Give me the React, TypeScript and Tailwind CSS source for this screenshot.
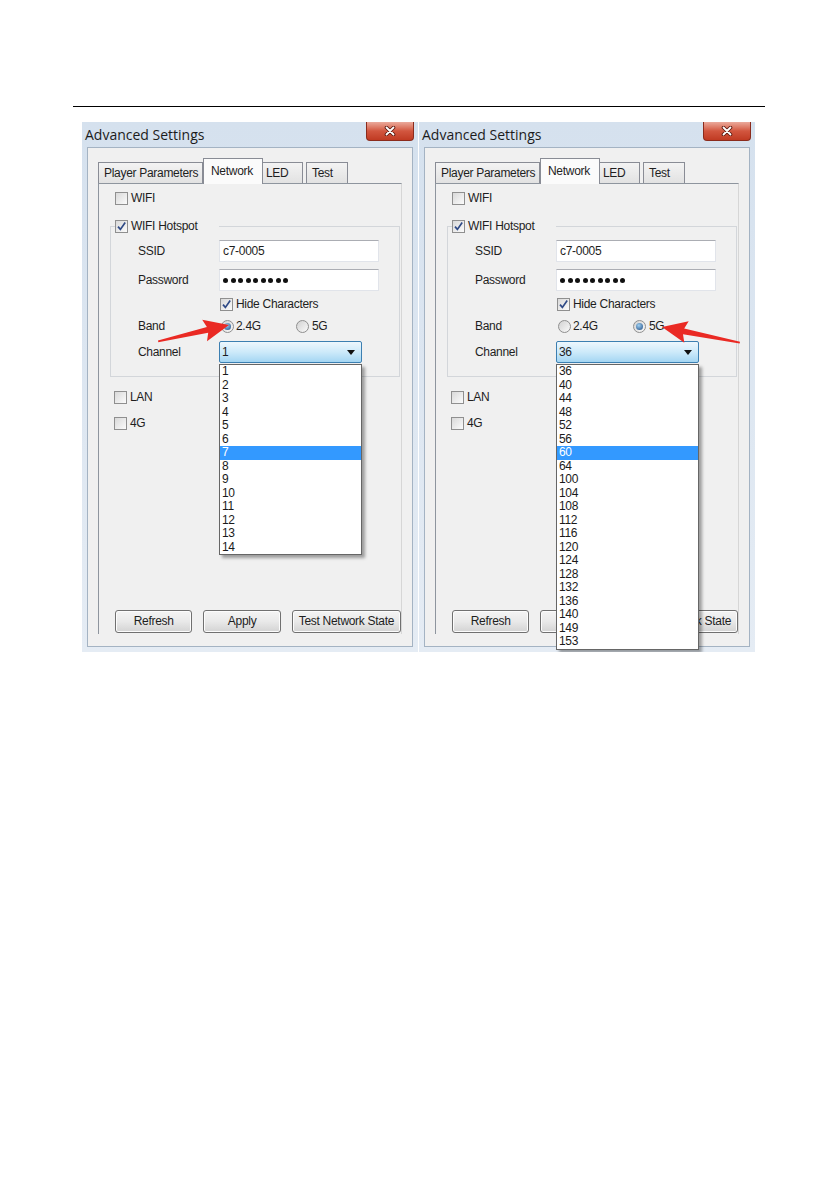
import React from 'react';

type Side = {
  band: '2.4G' | '5G';
  channel: string;
  channels: string[];
  selected: string;
};

const LEFT: Side = {
  band: '2.4G',
  channel: '1',
  channels: ['1', '2', '3', '4', '5', '6', '7', '8', '9', '10', '11', '12', '13', '14'],
  selected: '7',
};

const RIGHT: Side = {
  band: '5G',
  channel: '36',
  channels: [
    '36', '40', '44', '48', '52', '56', '60', '64', '100', '104', '108',
    '112', '116', '120', '124', '128', '132', '136', '140', '149', '153',
  ],
  selected: '60',
};

const Checkbox = ({ checked = false }: { checked?: boolean }) => (
  <span className="inline-flex h-[13px] w-[13px] shrink-0 items-center justify-center border border-[#8f8f8f] bg-linear-to-br from-[#d9d9d9] to-[#fbfbfb]">
    {checked && (
      <svg viewBox="0 0 11 11" className="h-[11px] w-[11px]">
        <path d="M2 5.6 L4.4 8.4 L9.2 1.6" stroke="#2f4a86" strokeWidth="1.7" fill="none" />
      </svg>
    )}
  </span>
);

const Radio = ({ checked = false }: { checked?: boolean }) => (
  <span className="inline-flex h-[13px] w-[13px] shrink-0 items-center justify-center rounded-full border border-[#8f8f8f] bg-linear-to-br from-[#d2d2d2] to-[#fafafa]">
    {checked && (
      <span className="h-[7px] w-[7px] rounded-full bg-[radial-gradient(circle_at_40%_35%,#9fd0f2,#1d4a82)]" />
    )}
  </span>
);

const CheckRow = ({ checked = false, label }: { checked?: boolean; label: string }) => (
  <div className="flex h-[13px] items-center gap-[3px]">
    <Checkbox checked={checked} />
    <span>{label}</span>
  </div>
);

const CloseButton = () => (
  <div className="mr-[4px] flex h-[19px] w-[48px] items-center justify-center rounded-b-[4px] border border-t-0 border-[#8b2b1c] bg-linear-to-b from-[#eaa99b] via-[#d2563f] to-[#c03a22]">
    <svg viewBox="0 0 12 10" className="h-[10px] w-[12px]">
      <path d="M2.5 1.5 L9.5 8.5 M9.5 1.5 L2.5 8.5" stroke="#5b1910" strokeWidth="3.6" strokeLinecap="round" />
      <path d="M2.5 1.5 L9.5 8.5 M9.5 1.5 L2.5 8.5" stroke="#ffffff" strokeWidth="1.8" strokeLinecap="round" />
    </svg>
  </div>
);

const Field = ({ label, children }: { label: string; children: React.ReactNode }) => (
  <div className="flex items-center pl-[23px]">
    <span className="w-[81px]">{label}</span>
    <div className="flex h-[22px] w-[160px] items-center border border-[#e1e4ea] border-t-[#abadb3] bg-white pl-[3px]">
      {children}
    </div>
  </div>
);

const ChannelSelect = ({ side }: { side: Side }) => (
  <div className="relative h-[22px] w-[143px]">
    <div className="flex h-full items-center justify-between rounded-[2px] border border-[#3c7fb1] bg-linear-to-b from-[#edf7fd] via-[#cdeafa] to-[#a4d6f3] pl-[2px] pr-[6px]">
      <span>{side.channel}</span>
      <svg viewBox="0 0 8 5" className="h-[5px] w-[8px]">
        <path d="M0 0 H8 L4 5 Z" fill="#111" />
      </svg>
    </div>
    <ul className="absolute left-0 top-[23px] z-20 w-[143px] border border-[#666666] bg-white shadow-[3px_3px_3px_rgba(0,0,0,0.35)]">
      {side.channels.map((c) => (
        <li
          key={c}
          className={`h-[13.5px] pl-[2px] leading-[13.5px] ${
            c === side.selected ? 'bg-[#3399ff] text-white' : 'text-[#1a1a1a]'
          }`}
        >
          {c}
        </li>
      ))}
    </ul>
  </div>
);

const Button = ({ label, className }: { label: string; className: string }) => (
  <div
    className={`flex h-[23px] items-center justify-center rounded-[3px] border border-[#707070] bg-linear-to-b from-[#f4f4f4] via-[#e9e9e9] to-[#d3d3d3] shadow-[inset_0_0_0_1px_#fcfcfc] ${className}`}
  >
    {label}
  </div>
);

const Window = ({ side }: { side: Side }) => (
  <div className="flex h-[530px] w-[336px] flex-col overflow-hidden bg-linear-to-b from-[#d5e1ee] to-[#e5ecf4]">
    <div className="flex h-[25px] shrink-0 items-start justify-between">
      <span className="self-center pl-[3px] font-['Open_Sans',sans-serif] text-[14px] leading-[18px] tracking-normal text-[#1c1c1c]">
        Advanced Settings
      </span>
      <CloseButton />
    </div>

    <div className="mx-[5px] mb-[5px] flex flex-1 flex-col border border-[#a4b3c3] bg-[#f0f0f0] px-[10px] pb-[12px] pt-[10px]">
      {/* tabs */}
      <div className="relative z-10 flex h-[25px] items-end">
        <div className="flex h-[21px] w-[105px] items-center border border-b-0 border-[#898c95] bg-linear-to-b from-[#f3f3f3] to-[#e2e2e2] pl-[5px]">
          Player Parameters
        </div>
        <div className="-mb-px flex h-[26px] w-[60px] items-start border border-b-0 border-[#898c95] bg-[#fbfbfb] pl-[7px] pt-[6px]">
          Network
        </div>
        <div className="flex h-[21px] w-[40px] items-center border border-b-0 border-l-0 border-[#898c95] bg-linear-to-b from-[#f3f3f3] to-[#e2e2e2] pl-[3px]">
          LED
        </div>
        <div className="ml-[3px] flex h-[21px] w-[42px] items-center border border-b-0 border-[#898c95] bg-linear-to-b from-[#f3f3f3] to-[#e2e2e2] pl-[5px]">
          Test
        </div>
      </div>

      {/* panel */}
      <div className="flex flex-1 flex-col border-l border-r border-t border-[#8e959e] border-r-[#d6d6d6]">
        <div className="ml-[16px] mt-[8px]">
          <CheckRow label="WIFI" />
        </div>

        <fieldset className="ml-[11px] mt-[15px] w-[290px] border border-[#d3d6da] px-[4px] pb-[13px]">
          <legend className="flex h-[13px] items-center gap-[3px] pr-[22px]">
            <Checkbox checked />
            <span>WIFI Hotspot</span>
          </legend>
          <div className="mt-[7px]">
            <Field label="SSID">
              <span>c7-0005</span>
            </Field>
          </div>
          <div className="mt-[7px]">
            <Field label="Password">
              <div className="flex gap-[2.5px]">
                {Array.from({ length: 9 }).map((_, i) => (
                  <span key={i} className="h-[5px] w-[5px] rounded-full bg-[#111]" />
                ))}
              </div>
            </Field>
          </div>
          <div className="mt-[7px] flex items-center pl-[105px]">
            <CheckRow checked label="Hide Characters" />
          </div>
          <div className="mt-[9px] flex h-[13px] items-center pl-[23px]">
            <span className="w-[83px]">Band</span>
            <div className="flex w-[75px] items-center gap-[2px]">
              <Radio checked={side.band === '2.4G'} />
              <span>2.4G</span>
            </div>
            <div className="flex items-center gap-[3px]">
              <Radio checked={side.band === '5G'} />
              <span>5G</span>
            </div>
          </div>
          <div className="mt-[8px] flex items-center pl-[23px]">
            <span className="w-[81px]">Channel</span>
            <ChannelSelect side={side} />
          </div>
        </fieldset>

        <div className="ml-[15px] mt-[14px]">
          <CheckRow label="LAN" />
        </div>
        <div className="ml-[15px] mt-[13px]">
          <CheckRow label="4G" />
        </div>

        <div className="mt-auto flex gap-[11px] pb-[1px] pl-[16px]">
          <Button label="Refresh" className="w-[78px]" />
          <Button label="Apply" className="w-[78px]" />
          <Button label="Test Network State" className="w-[110px]" />
        </div>
      </div>
    </div>
  </div>
);

export default function App() {
  return (
    <div className="relative h-[1191px] w-[839px] overflow-hidden bg-white font-['Liberation_Sans',Arial,sans-serif] text-[12px] leading-[13px] tracking-[-0.3px] text-[#1e1e1e]">
      <div className="ml-[73px] pt-[106px]">
        <div className="h-px w-[692px] bg-black" />
      </div>

      <div className="ml-[82px] mt-[15px] flex gap-[1px]">
        <Window side={LEFT} />
        <Window side={RIGHT} />
      </div>

      {/* red callout arrows */}
      <svg className="pointer-events-none absolute left-0 top-0 z-30" width="839" height="1191">
        <polygon
          points="158,340.6 206.9,326.9 202.2,319.8 229,325 207,341.2 208.2,332.8 158.3,342.3"
          fill="#ea2a24"
        />
        <polygon
          points="740,341.8 684.2,328.5 688.7,321.2 662,327 684.3,342.8 683,334.3 739.7,343.6"
          fill="#ea2a24"
        />
      </svg>
    </div>
  );
}
